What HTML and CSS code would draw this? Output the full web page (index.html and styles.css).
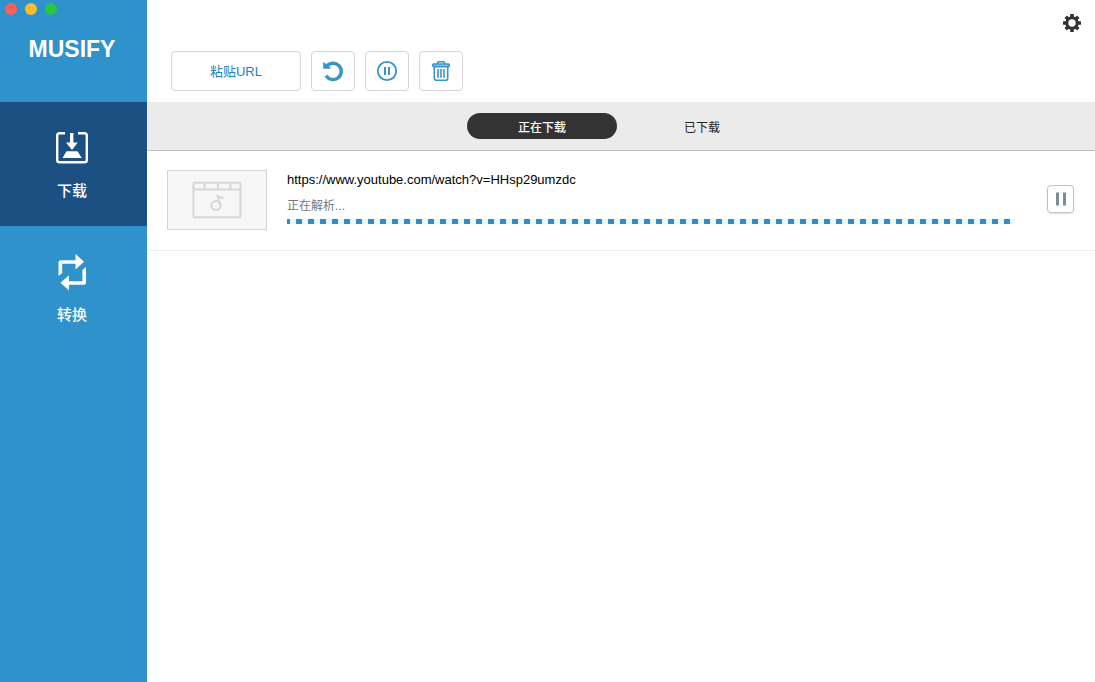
FILE: index.html
```html
<!DOCTYPE html>
<html lang="zh-CN">
<head>
<meta charset="utf-8">
<title>Musify</title>
<link rel="stylesheet" href="styles.css">
</head>
<body>
<div class="app">
  <aside class="sidebar">
    <div class="brand">
      <div class="lights">
        <button class="light close" aria-label="关闭"></button>
        <button class="light minimize" aria-label="最小化"></button>
        <button class="light maximize" aria-label="最大化"></button>
      </div>
      <h1 class="logo">MUSIFY</h1>
    </div>
    <nav>
      <button class="nav-item active">
        <svg width="34" height="34" viewBox="0 0 34 34" fill="none" stroke="#fff" stroke-width="2.4" aria-hidden="true">
          <path d="M10 3.200H4.500Q2.200 3.200 2.200 5.500V30Q2.200 32.300 4.500 32.300H29.500Q31.800 32.300 31.800 30V5.500Q31.800 3.200 29.500 3.200H23"/>
          <path d="M15 3H18.400V12.500H22.800L17 20L11 12.500H15ZM11.500 21.300H22.500L26.800 28H7.500Z" fill="#fff" stroke="none"/>
        </svg>
        <span>下载</span>
      </button>
      <button class="nav-item">
        <svg width="34" height="38" viewBox="0 0 34 38" aria-hidden="true">
          <path d="M3.500 22V8.500Q3.500 6.200 5.800 6.200H20.500V0L29 7.800L20.500 15.500V9.800H7.200V19ZM31 13V28.500Q31 30.800 28.800 30.800H14V36.500L5.500 28.800L14 21.200V27.200H27.400V16Z" fill="#fff"/>
        </svg>
        <span>转换</span>
      </button>
    </nav>
  </aside>
  <main class="main">
    <header class="header">
      <div class="toolbar">
        <button class="tool paste">粘贴URL</button>
        <button class="tool" aria-label="重新开始">
          <svg width="22" height="22" viewBox="0 0 22 22" fill="none" aria-hidden="true">
            <path d="M4.500 6.500A8.200 8.200 0 1 1 4 15.500" stroke="#3a94cb" stroke-width="3.400"/>
            <path d="M1.200 2L3.800 3.800L8.500 7.500V8.800H1.200Z" fill="#3a94cb"/>
          </svg>
        </button>
        <button class="tool" aria-label="全部暂停">
          <svg width="22" height="22" viewBox="0 0 22 22" fill="none" stroke="#3a94cb" aria-hidden="true">
            <circle cx="11" cy="11" r="9.200" stroke-width="1.800"/>
            <path d="M9 7V15M13 7V15" stroke-width="2"/>
          </svg>
        </button>
        <button class="tool" aria-label="删除">
          <svg width="22" height="22" viewBox="0 0 22 22" fill="none" stroke="#3a94cb" stroke-width="1.600" stroke-linejoin="round" aria-hidden="true">
            <path d="M7.500 4V2.800Q7.500 1.700 8.600 1.700H13.400Q14.500 1.700 14.500 2.800V4"/>
            <rect x="2.700" y="4" width="16.600" height="2.600" rx="1" fill="#9bcbe6"/>
            <path d="M4.300 6.800V18.300Q4.300 20.300 6.300 20.300H15.700Q17.700 20.300 17.700 18.300V6.800M8 9V17.700M11 9V17.700M14 9V17.700"/>
          </svg>
        </button>
      </div>
      <button class="settings" aria-label="设置">
        <svg width="20" height="20" viewBox="0 0 20 20" fill="none" stroke="#333" aria-hidden="true">
          <circle cx="10" cy="10" r="5.200" stroke-width="3"/>
          <path d="M10 1V5M10 15V19M1 10H5M15 10H19M3.700 3.700L6.500 6.500M13.500 13.500L16.300 16.300M3.700 16.300L6.500 13.500M13.500 6.500L16.300 3.700" stroke-width="3.600"/>
        </svg>
      </button>
    </header>
    <div class="tabs">
      <button class="tab selected">正在下载</button>
      <button class="tab">已下载</button>
    </div>
    <section class="item">
      <div class="thumb">
        <svg width="50" height="38" viewBox="0 0 50 38" fill="none" stroke="#d6d6d6" stroke-width="2" aria-hidden="true">
          <rect x="1.400" y="1.700" width="47" height="34.500" rx="1"/>
          <path d="M1 8.500H49M12.500 2V8M26 2V8M38.500 2V8"/>
          <circle cx="24" cy="24.500" r="4.600"/>
          <path d="M28.600 25L25.500 15L31.500 17.500"/>
        </svg>
      </div>
      <div class="info">
        <div class="url">https://www.youtube.com/watch?v=HHsp29umzdc</div>
        <div class="status">正在解析...</div>
        <div class="progress" role="progressbar" aria-label="正在解析"></div>
      </div>
      <button class="pause" aria-label="暂停">
        <svg width="12" height="14" viewBox="0 0 12 14" fill="#7c8d9a" aria-hidden="true"><path d="M1 0.500H4V13.500H1ZM8 0.500H11V13.500H8Z"/></svg>
      </button>
    </section>
  </main>
</div>
</body>
</html>
```
FILE: styles.css
```css
* {
  box-sizing: border-box;
}

body {
  margin: 0;
  background: #fff;
  font-family: "Liberation Sans", "Noto Sans CJK SC", sans-serif;
  color: #000;
}

button {
  margin: 0;
  padding: 0;
  border: 0;
  background: none;
  font: inherit;
  color: inherit;
}

svg {
  display: block;
}

.app {
  display: flex;
  min-height: 100vh;
}

.sidebar {
  flex: none;
  width: 147px;
  background: #2f92ca;
  color: #fff;
}

.brand {
  height: 102px;
  padding-top: 3px;
}

.lights {
  display: flex;
  gap: 8px;
  padding-left: 5px;
}

.light {
  width: 12px;
  height: 12px;
  border-radius: 50%;
}

.close {
  background: #fc605b;
}

.minimize {
  background: #fdbc30;
}

.maximize {
  background: #29c740;
}

.logo {
  margin: 20px 0 0;
  padding-right: 3px;
  font-size: 23px;
  line-height: 28px;
  text-align: center;
}

.nav-item {
  display: flex;
  flex-direction: column;
  align-items: center;
  justify-content: space-between;
  width: 100%;
  height: 124px;
  padding: 28px 3px 24px 0;
  font-size: 15px;
  font-weight: 500;
  line-height: 22px;
}

.active {
  background: #1c5083;
}

.main {
  flex: 1;
  min-width: 0;
}

.header {
  display: flex;
  justify-content: space-between;
  align-items: flex-start;
  height: 102px;
  padding: 13px 13px 0 24px;
}

.toolbar {
  display: flex;
  gap: 10px;
  padding-top: 38px;
}

.tool {
  display: flex;
  align-items: center;
  justify-content: center;
  width: 44px;
  height: 40px;
  border: 1px solid #d6d6d6;
  border-radius: 4px;
}

.paste {
  width: 130px;
  padding-bottom: 2px;
  font-size: 13px;
  color: #2382c0;
}

.tabs {
  display: flex;
  align-items: center;
  justify-content: center;
  gap: 10px;
  height: 49px;
  padding-left: 2px;
  border-bottom: 1px solid #c3c3c3;
  background: #ebebeb;
}

.tab {
  width: 150px;
  height: 26px;
  border-radius: 13px;
  font-size: 12px;
  color: #222;
}

.selected {
  background: #333;
  color: #fff;
  font-weight: 500;
}

.item {
  display: flex;
  align-items: flex-start;
  height: 100px;
  padding: 19px 21px 0 20px;
  border-bottom: 1px solid #efefef;
}

.thumb {
  display: flex;
  align-items: center;
  justify-content: center;
  width: 100px;
  height: 60px;
  border: 1px solid #d6d6d6;
  background: #f6f6f6;
}

.info {
  flex: 1;
  min-width: 0;
  margin: 0 32px 0 20px;
}

.url {
  font-size: 13px;
  line-height: 20px;
}

.status {
  margin-top: 6px;
  font-size: 12px;
  line-height: 20px;
  color: #777;
}

.progress {
  height: 5px;
  margin-top: 3px;
  background: repeating-linear-gradient(90deg, #2d8fc8 0 3px, #e8faff 3px 9px, #2d8fc8 9px 12px);
}

.pause {
  display: flex;
  align-items: center;
  justify-content: center;
  width: 27px;
  height: 28px;
  margin-top: 15px;
  border: 1px solid #bfc3c6;
  border-radius: 4px;
  box-shadow: 0 1px 2px #ddd;
}
```
